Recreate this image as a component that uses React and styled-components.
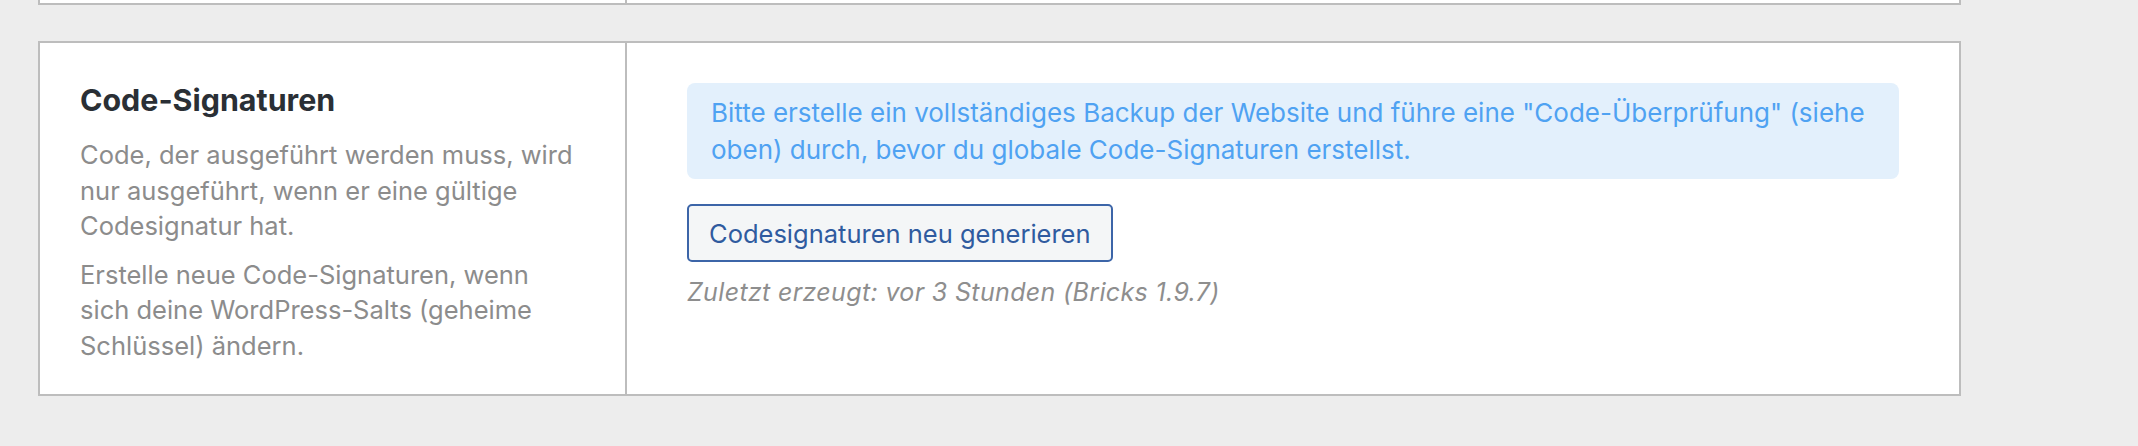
import React from "react";
import styled, { createGlobalStyle } from "styled-components";

const GlobalStyle = createGlobalStyle`
  html, body {
    margin: 0;
    padding: 0;
    background: #ededed;
  }
  body {
    font-family: Inter, "Noto Sans", "Liberation Sans", sans-serif;
    -webkit-font-smoothing: antialiased;
  }
`;

const Page = styled.div`
  padding: 0 177px 40px 38px;
`;

const Card = styled.section`
  display: grid;
  grid-template-columns: 587px 1fr;
  background: #fff;
  border: 2px solid #bdbdbd;
  ${(p) =>
    p.$tail &&
    `
    border-top: none;
    height: 3px;
    margin-bottom: 36px;
  `}
`;

const Aside = styled.div`
  border-right: 2px solid #bdbdbd;
  padding: ${(p) => (p.$empty ? "0" : "40px 47px 30px 40px")};
`;

const Main = styled.div`
  padding: ${(p) => (p.$empty ? "0" : "40px 60px")};
`;

const Title = styled.h3`
  margin: 0 0 20px;
  font-size: 30.4px;
  line-height: 34px;
  font-weight: 700;
  color: #2a2f35;
`;

const Desc = styled.p`
  margin: 0;
  font-size: 25.5px;
  line-height: 35.7px;
  color: #8c8c8c;

  & + & {
    margin-top: 12.5px;
  }
`;

const Notice = styled.div`
  background: #e3f0fc;
  border-radius: 8px;
  padding: 12px 14px 11px 24px;
  font-size: 26px;
  line-height: 36.6px;
  color: #4fa2f2;
`;

const Button = styled.button`
  display: block;
  margin-top: 25px;
  height: 58px;
  padding: 0 20px;
  background: #f4f6f7;
  border: 2px solid #3c65a8;
  border-radius: 5px;
  font-family: inherit;
  font-size: 25.5px;
  color: #2f5b9f;
  cursor: pointer;
`;

const Meta = styled.p`
  margin: 13px 0 0;
  font-size: 25px;
  line-height: 34px;
  letter-spacing: 0.35px;
  font-style: italic;
  color: #8e8e8e;
`;

export default function App() {
  return (
    <>
      <GlobalStyle />
      <Page>
        <Card $tail>
          <Aside $empty />
          <Main $empty />
        </Card>
        <Card>
          <Aside>
            <Title>Code-Signaturen</Title>
            <Desc>
              Code, der ausgeführt werden muss, wird nur ausgeführt, wenn er
              eine gültige Codesignatur hat.
            </Desc>
            <Desc>
              Erstelle neue Code-Signaturen, wenn sich deine WordPress-Salts
              (geheime Schlüssel) ändern.
            </Desc>
          </Aside>
          <Main>
            <Notice>
              Bitte erstelle ein vollständiges Backup der Website und führe
              eine "Code-Überprüfung" (siehe oben) durch, bevor du globale
              Code-Signaturen erstellst.
            </Notice>
            <Button type="button">Codesignaturen neu generieren</Button>
            <Meta>Zuletzt erzeugt: vor 3 Stunden (Bricks 1.9.7)</Meta>
          </Main>
        </Card>
      </Page>
    </>
  );
}
